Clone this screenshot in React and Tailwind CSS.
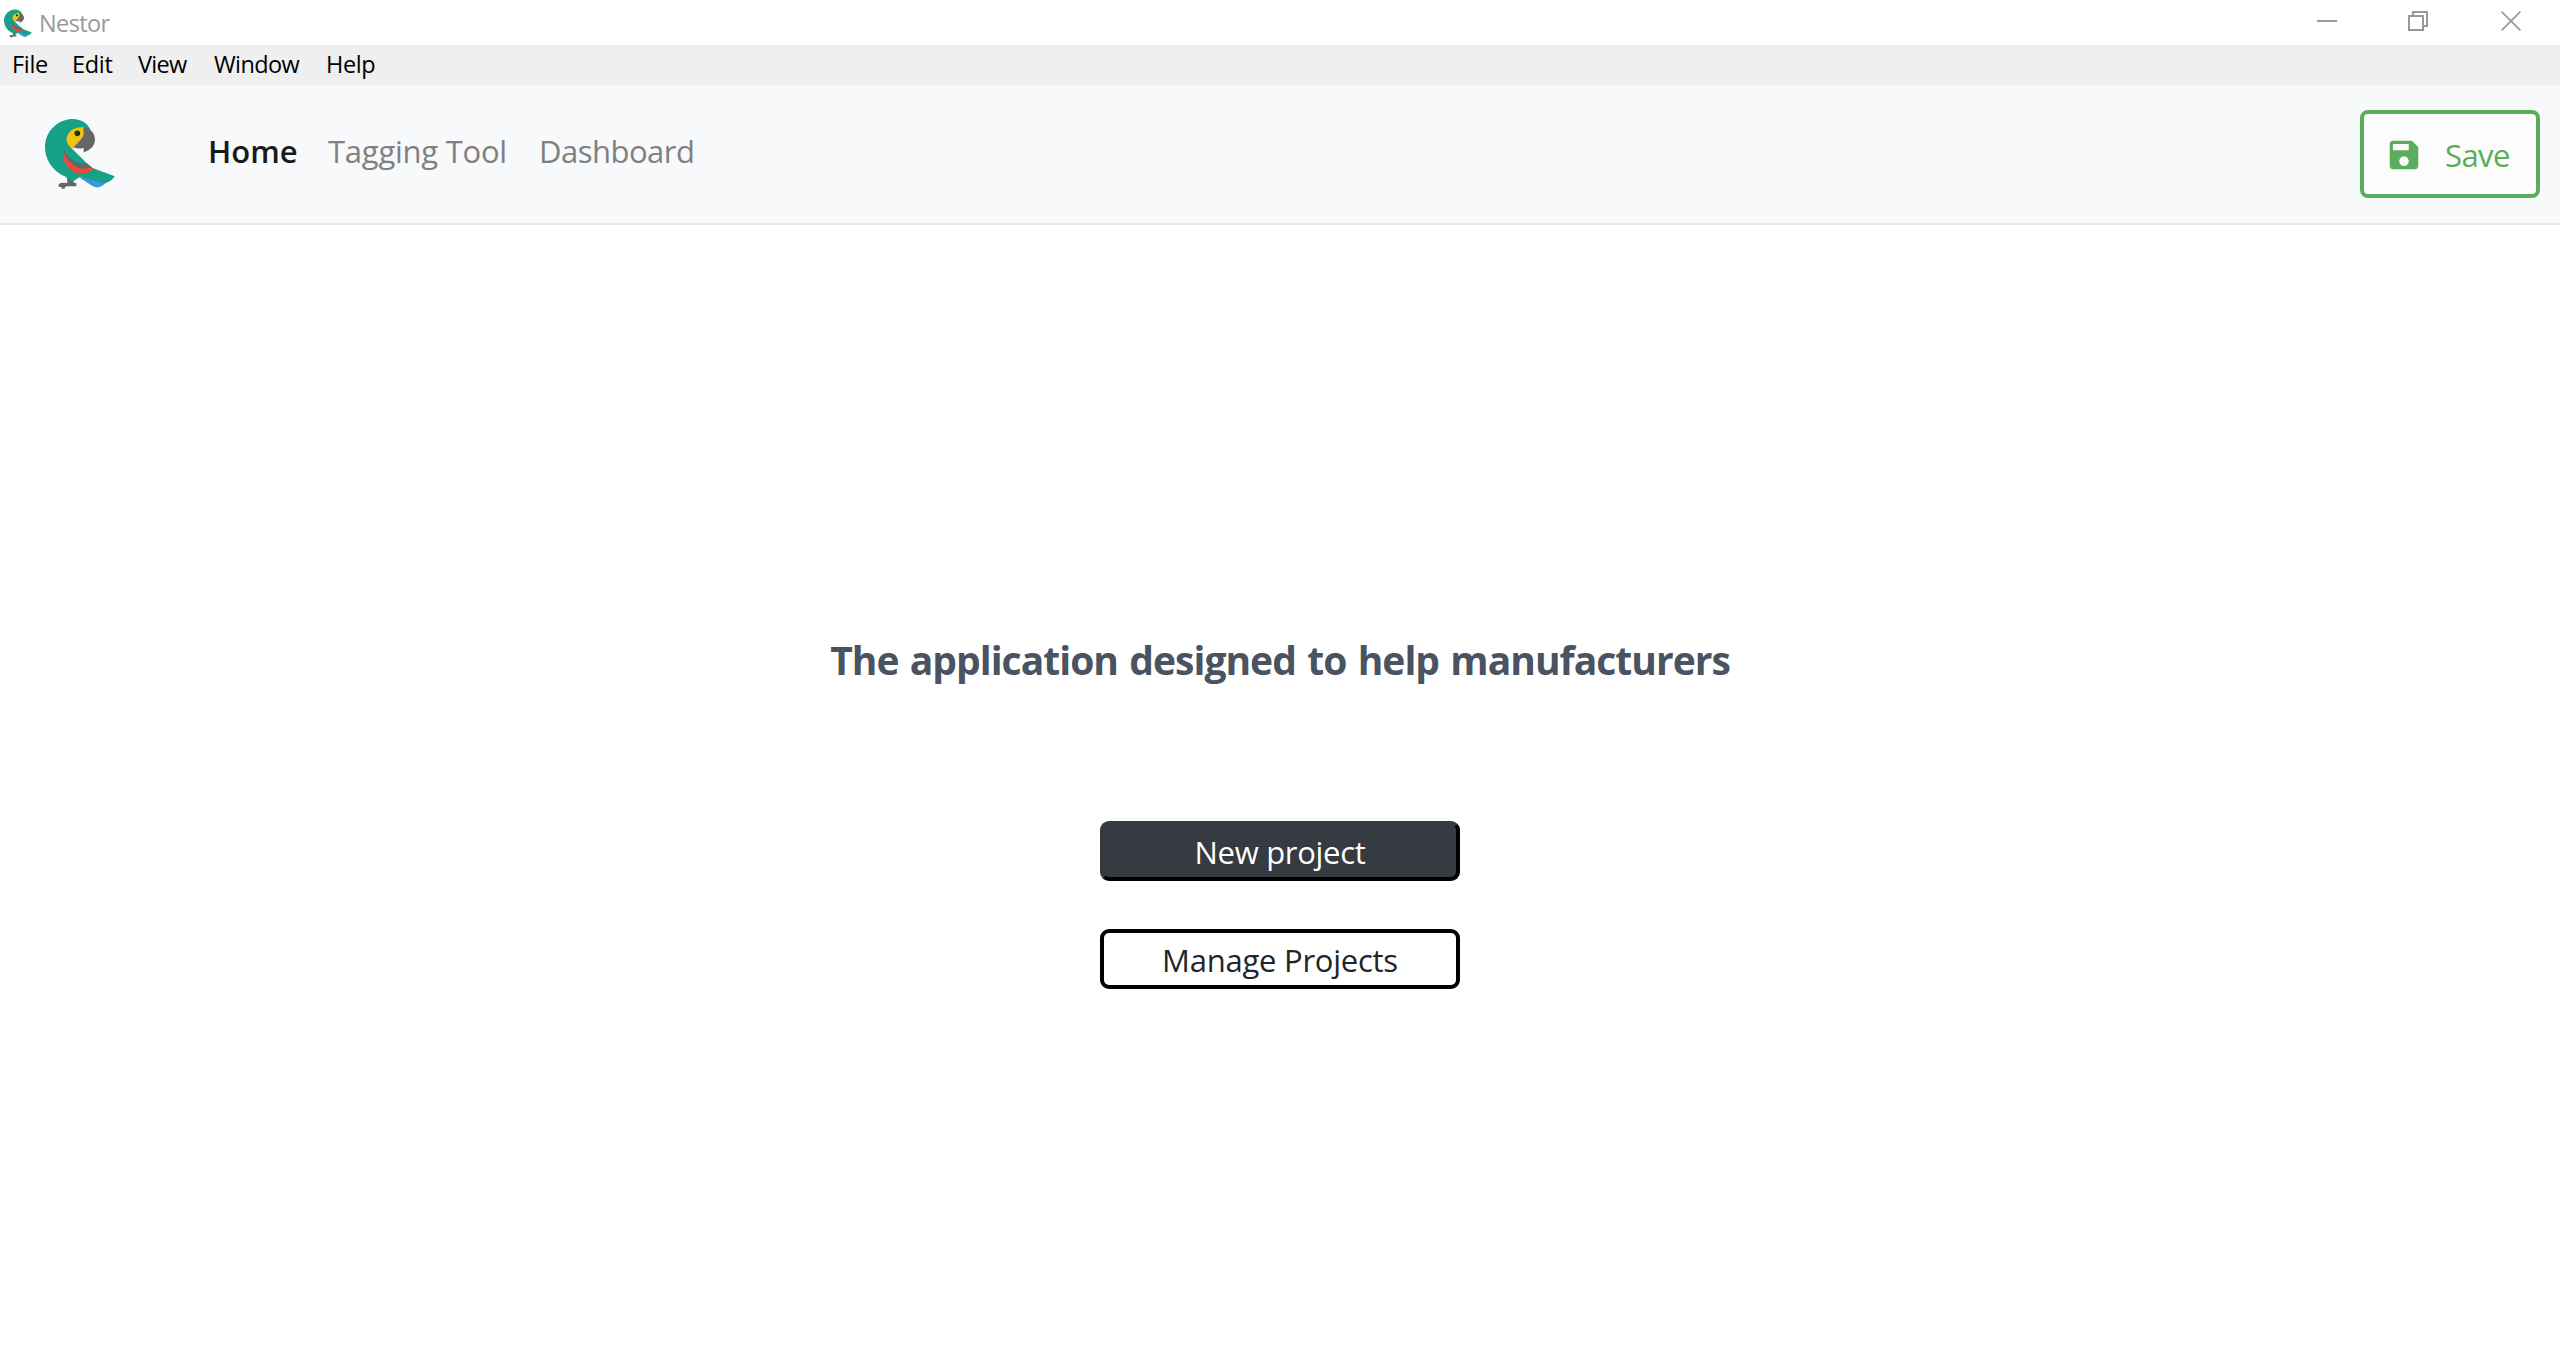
function Parrot({ className }) {
  return (
    <svg className={className} viewBox="0 0 300 300" aria-hidden="true">
      <path fill="#666" d="M111 234h18l3 15h7v10h-27q-5 0-7 3l-1 4h-9l-1-5h-8v-9q5-4 14-4l12 1z" />
      <path fill="#3b97d9" d="M146 232l44 5 38 11q-10 10-22 14-10 1-20-5-20-13-40-25z" />
      <path
        fill="#16a085"
        d="M181 88C170 66 149 56 125 57C78 60 45 98 45 141C45 184 75 218 107 230C112 237 118 242 128 243Q138 240 149 231L226 250Q245 244 254 229L186 203L172 191L131 151Q117 140 112 120Z"
      />
      <path fill="#666" d="M101 145C107 164 122 180 142 188Q156 192 171 190L188 205Q168 212 148 208C120 200 102 180 101 145Z" />
      <path fill="#e74c3c" d="M101 150C103 174 124 198 150 205Q168 208 182 202L191 207Q176 221 152 222C120 218 93 190 101 150Z" />
      <path fill="#f1c40f" d="M161 82C135 80 112 94 110 115Q109 132 121 141L132 146L161 110Z" />
      <path fill="#666" d="M161 82C181 84 195 100 195 119C195 138 179 151 161 157V143Q147 149 131 141Q140 133 148 124Q160 110 161 102Z" />
      <circle cx="142" cy="100" r="8.5" fill="#0c3b12" />
    </svg>
  );
}

function WindowControls() {
  return (
    <div className="flex h-full items-center pr-[39px] pb-[3px] text-[#999]">
      <svg className="mr-[71px] h-5 w-5" viewBox="0 0 20 20" shapeRendering="crispEdges">
        <path d="M0 10h20" stroke="currentColor" strokeWidth="2" />
      </svg>
      <svg className="mr-[73px] h-5 w-5" viewBox="0 0 20 20" fill="none" stroke="currentColor" strokeWidth="2" shapeRendering="crispEdges">
        <path d="M1 5h14v14H1zM5 5V1h14v14h-4" />
      </svg>
      <svg className="h-5 w-5" viewBox="0 0 20 20" fill="none" stroke="currentColor" strokeWidth="1.7">
        <path d="M.6.6l18.8 18.8M19.4.6L.6 19.4" />
      </svg>
    </div>
  );
}

export default function App() {
  return (
    <div className="flex h-screen w-full flex-col overflow-hidden bg-white font-['Open_Sans',sans-serif]">
      <header className="flex h-[45px] shrink-0 items-center justify-between">
        <div className="flex items-center pl-[2px]">
          <Parrot className="-mt-[2px] -ml-[4px] h-[40px] w-[40px]" />
          <span className="pt-px pl-px text-[23.5px] leading-8 tracking-[-0.6px] text-[#999]">Nestor</span>
        </div>
        <WindowControls />
      </header>

      <div className="flex h-10 shrink-0 items-center bg-[#efefef] pb-[2px] pl-3 text-[23.5px] leading-8 text-black">
        <span className="w-[60px] tracking-[-0.3px]">File</span>
        <span className="w-[66px] tracking-[-0.3px]">Edit</span>
        <span className="w-[76px] tracking-[-0.7px]">View</span>
        <span className="w-[112px] tracking-[-0.6px]">Window</span>
        <span className="tracking-[-0.4px]">Help</span>
      </div>

      <nav className="flex h-[140px] shrink-0 items-start border-b-2 border-[#e4e8f0] bg-[#f8f9fb]">
        <Parrot className="mt-[15px] ml-[30px] h-[100px] w-[100px]" />
        <div className="mt-[46px] ml-[78px] flex text-[31px] leading-10 text-[#808080]">
          <a className="w-[120px] font-semibold text-[#1a1a1a]">Home</a>
          <a className="w-[211px] tracking-[-0.25px]">Tagging Tool</a>
          <a className="tracking-[-0.5px]">Dashboard</a>
        </div>
        <button className="mt-[25px] mr-5 ml-auto flex h-[88px] w-[180px] items-center rounded-lg border-4 border-[#5aad5a] bg-[#fdfdfd] pl-[21px] text-[#5aad5a]">
          <svg className="mt-[2px] h-[38px] w-[38px]" viewBox="0 0 24 24" fill="currentColor">
            <path d="M17 3H5c-1.11 0-2 .9-2 2v14c0 1.1.89 2 2 2h14c1.1 0 2-.9 2-2V7l-4-4zm-5 16c-1.66 0-3-1.34-3-3s1.34-3 3-3 3 1.34 3 3-1.34 3-3 3zm3-10H5V5h10v4z" />
          </svg>
          <span className="ml-[22px] pt-[2px] text-[31px] leading-10 tracking-[-0.6px]">Save</span>
        </button>
      </nav>

      <main className="flex flex-col items-center">
        <h1 className="mt-[405px] text-[39px] leading-[60px] font-bold tracking-[-0.98px] text-[#495361] [word-spacing:2.2px]">
          The application designed to help manufacturers
        </h1>
        <button className="mt-[131px] h-[60px] w-[360px] rounded-[9px] border-4 border-t-[#363a41] border-r-black border-b-black border-l-[#363a41] bg-[#363a41] pt-[2px] text-[31px] leading-10 tracking-[-0.3px] text-white">
          New project
        </button>
        <button className="mt-12 h-[60px] w-[360px] rounded-[9px] border-4 border-black bg-white pt-[2px] text-[31px] leading-10 tracking-[-0.25px] text-[#212529]">
          Manage Projects
        </button>
      </main>
    </div>
  );
}
